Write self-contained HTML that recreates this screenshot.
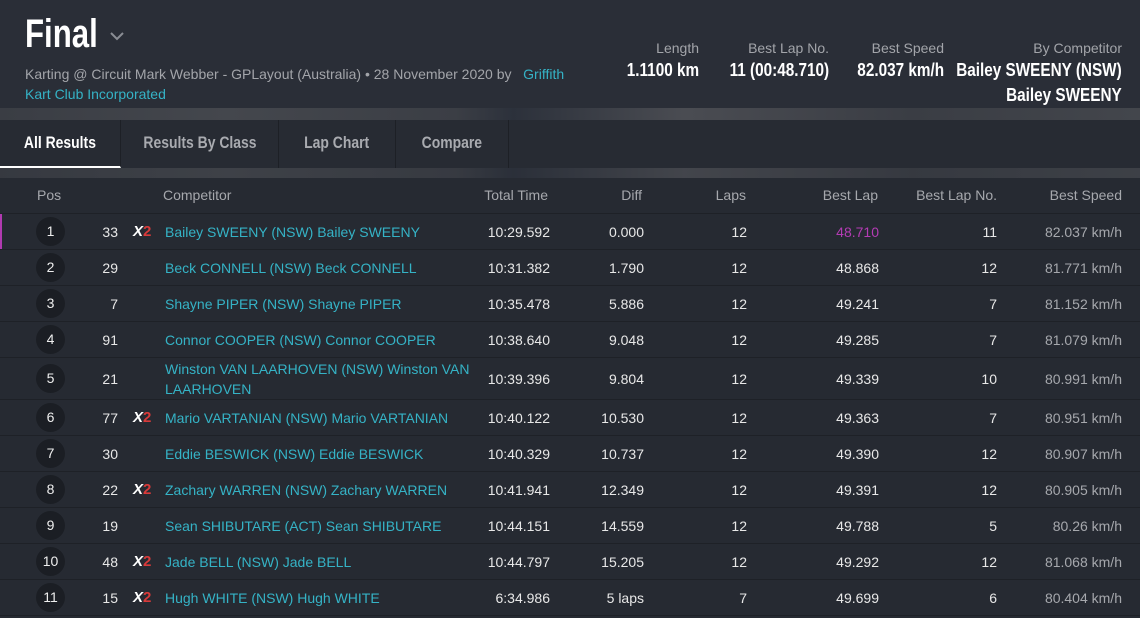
<!DOCTYPE html>
<html><head><meta charset="utf-8"><style>
*{margin:0;padding:0;box-sizing:border-box}
body{width:1140px;height:618px;overflow:hidden;background:#262a32;font-family:"Liberation Sans",sans-serif;color:#e8e8e8;position:relative}
.hdr{position:absolute;left:0;top:0;width:1140px;height:108px;background:#2a2e37}
.band{position:absolute;left:0;width:1140px;background:linear-gradient(90deg,#3a3d44 0%,#44474d 20%,#3b3e45 40%,#2c313b 45%,#4a4c52 60%,#3a3d44 80%,#43464c 100%)}
.tabs{position:absolute;left:0;top:120px;height:48px;width:1140px;background:#272b33}
.tab{position:absolute;top:0;height:48px;line-height:46px;text-align:center;font-size:17px;color:#a9abb0;border-right:1px solid #1d2026}
.tab span{display:inline-block;transform:scaleX(.82);font-weight:bold}
.a{position:absolute;white-space:nowrap}
.r{text-align:right}
.lnk{color:#35b3c6}
.row{position:absolute;left:0;width:1140px;border-bottom:1px solid #1e2127;font-size:14px}
.circ{position:absolute;left:36px;width:29px;height:29px;border-radius:50%;background:#1b1e24;text-align:center;line-height:29px;color:#eee}
.x2{font-style:italic;font-weight:bold;font-size:15px;color:#fff}
.x2 b{color:#d83a3a;font-style:normal}
.th{position:absolute;top:187px;font-size:14px;color:#a6a8ad}
.spd{color:#a6a8ad}
.lab{font-size:14px;color:#a3a5aa;top:40px}
.val{top:58px;font-size:18px;color:#fff;font-weight:bold;transform:scaleX(.85);transform-origin:right;line-height:25px}
</style></head><body>
<div class="hdr"></div>
<div class="a" style="left:25px;top:12px;font-size:40px;color:#fff;font-weight:bold;transform:scaleX(.78);transform-origin:left">Final</div>
<svg class="a" style="left:110px;top:31px" width="14" height="10"><path d="M1 2 L7 8 L13 2" stroke="#8a8d94" stroke-width="2" fill="none"/></svg>
<div class="a" style="left:25px;top:66px;font-size:14px;color:#a3a5aa">Karting @ Circuit Mark Webber - GPLayout (Australia) • 28 November 2020 by &nbsp; <span class="lnk">Griffith</span></div>
<div class="a lnk" style="left:25px;top:86px;font-size:14px">Kart Club Incorporated</div>
<div class="a r lab" style="right:441px">Length</div>
<div class="a r val" style="right:441px">1.1100 km</div>
<div class="a r lab" style="right:311px">Best Lap No.</div>
<div class="a r val" style="right:311px">11 (00:48.710)</div>
<div class="a r lab" style="right:196px">Best Speed</div>
<div class="a r val" style="right:196px">82.037 km/h</div>
<div class="a r lab" style="right:18px">By Competitor</div>
<div class="a r val" style="right:18px">Bailey SWEENY (NSW)<br>Bailey SWEENY</div>
<div class="band" style="top:108px;height:12px"></div>
<div class="tabs">
<div class="tab" style="left:0;width:121px;color:#fff;border-bottom:2px solid #fff"><span>All Results</span></div>
<div class="tab" style="left:121px;width:158px"><span>Results By Class</span></div>
<div class="tab" style="left:279px;width:117px"><span>Lap Chart</span></div>
<div class="tab" style="left:396px;width:113px"><span>Compare</span></div>
</div>
<div class="band" style="top:168px;height:10px;opacity:.8"></div>
<div class="a" style="left:0;top:178px;width:1140px;height:36px;border-bottom:1px solid #1e2127"></div>
<div class="th" style="left:37px">Pos</div>
<div class="th" style="left:163px">Competitor</div>
<div class="th r" style="right:592px">Total Time</div>
<div class="th r" style="right:498px">Diff</div>
<div class="th r" style="right:394px">Laps</div>
<div class="th r" style="right:262px">Best Lap</div>
<div class="th r" style="right:143px">Best Lap No.</div>
<div class="th r" style="right:18px">Best Speed</div>
<div class="row" style="top:214px;height:36px;box-shadow:inset 2px 0 0 #b03ab0"><div class="circ" style="top:3px">1</div><div class="a r" style="right:1022px;top:10px">33</div><div class="a x2" style="left:133px;top:9px">X<b>2</b></div><div class="a lnk" style="left:165px;top:10px">Bailey SWEENY (NSW) Bailey SWEENY</div><div class="a r" style="right:590px;top:10px">10:29.592</div><div class="a r" style="right:496px;top:10px">0.000</div><div class="a r" style="right:393px;top:10px">12</div><div class="a r" style="right:261px;top:10px;color:#b43cb4">48.710</div><div class="a r" style="right:143px;top:10px">11</div><div class="a r spd" style="right:18px;top:10px">82.037 km/h</div></div>
<div class="row" style="top:250px;height:36px"><div class="circ" style="top:3px">2</div><div class="a r" style="right:1022px;top:10px">29</div><div class="a lnk" style="left:165px;top:10px">Beck CONNELL (NSW) Beck CONNELL</div><div class="a r" style="right:590px;top:10px">10:31.382</div><div class="a r" style="right:496px;top:10px">1.790</div><div class="a r" style="right:393px;top:10px">12</div><div class="a r" style="right:261px;top:10px">48.868</div><div class="a r" style="right:143px;top:10px">12</div><div class="a r spd" style="right:18px;top:10px">81.771 km/h</div></div>
<div class="row" style="top:286px;height:36px"><div class="circ" style="top:3px">3</div><div class="a r" style="right:1022px;top:10px">7</div><div class="a lnk" style="left:165px;top:10px">Shayne PIPER (NSW) Shayne PIPER</div><div class="a r" style="right:590px;top:10px">10:35.478</div><div class="a r" style="right:496px;top:10px">5.886</div><div class="a r" style="right:393px;top:10px">12</div><div class="a r" style="right:261px;top:10px">49.241</div><div class="a r" style="right:143px;top:10px">7</div><div class="a r spd" style="right:18px;top:10px">81.152 km/h</div></div>
<div class="row" style="top:322px;height:36px"><div class="circ" style="top:3px">4</div><div class="a r" style="right:1022px;top:10px">91</div><div class="a lnk" style="left:165px;top:10px">Connor COOPER (NSW) Connor COOPER</div><div class="a r" style="right:590px;top:10px">10:38.640</div><div class="a r" style="right:496px;top:10px">9.048</div><div class="a r" style="right:393px;top:10px">12</div><div class="a r" style="right:261px;top:10px">49.285</div><div class="a r" style="right:143px;top:10px">7</div><div class="a r spd" style="right:18px;top:10px">81.079 km/h</div></div>
<div class="row" style="top:358px;height:42px"><div class="circ" style="top:6px">5</div><div class="a r" style="right:1022px;top:13px">21</div><div class="a lnk" style="left:165px;top:1px;line-height:20px">Winston VAN LAARHOVEN (NSW) Winston VAN<br>LAARHOVEN</div><div class="a r" style="right:590px;top:13px">10:39.396</div><div class="a r" style="right:496px;top:13px">9.804</div><div class="a r" style="right:393px;top:13px">12</div><div class="a r" style="right:261px;top:13px">49.339</div><div class="a r" style="right:143px;top:13px">10</div><div class="a r spd" style="right:18px;top:13px">80.991 km/h</div></div>
<div class="row" style="top:400px;height:36px"><div class="circ" style="top:3px">6</div><div class="a r" style="right:1022px;top:10px">77</div><div class="a x2" style="left:133px;top:9px">X<b>2</b></div><div class="a lnk" style="left:165px;top:10px">Mario VARTANIAN (NSW) Mario VARTANIAN</div><div class="a r" style="right:590px;top:10px">10:40.122</div><div class="a r" style="right:496px;top:10px">10.530</div><div class="a r" style="right:393px;top:10px">12</div><div class="a r" style="right:261px;top:10px">49.363</div><div class="a r" style="right:143px;top:10px">7</div><div class="a r spd" style="right:18px;top:10px">80.951 km/h</div></div>
<div class="row" style="top:436px;height:36px"><div class="circ" style="top:3px">7</div><div class="a r" style="right:1022px;top:10px">30</div><div class="a lnk" style="left:165px;top:10px">Eddie BESWICK (NSW) Eddie BESWICK</div><div class="a r" style="right:590px;top:10px">10:40.329</div><div class="a r" style="right:496px;top:10px">10.737</div><div class="a r" style="right:393px;top:10px">12</div><div class="a r" style="right:261px;top:10px">49.390</div><div class="a r" style="right:143px;top:10px">12</div><div class="a r spd" style="right:18px;top:10px">80.907 km/h</div></div>
<div class="row" style="top:472px;height:36px"><div class="circ" style="top:3px">8</div><div class="a r" style="right:1022px;top:10px">22</div><div class="a x2" style="left:133px;top:9px">X<b>2</b></div><div class="a lnk" style="left:165px;top:10px">Zachary WARREN (NSW) Zachary WARREN</div><div class="a r" style="right:590px;top:10px">10:41.941</div><div class="a r" style="right:496px;top:10px">12.349</div><div class="a r" style="right:393px;top:10px">12</div><div class="a r" style="right:261px;top:10px">49.391</div><div class="a r" style="right:143px;top:10px">12</div><div class="a r spd" style="right:18px;top:10px">80.905 km/h</div></div>
<div class="row" style="top:508px;height:36px"><div class="circ" style="top:3px">9</div><div class="a r" style="right:1022px;top:10px">19</div><div class="a lnk" style="left:165px;top:10px">Sean SHIBUTARE (ACT) Sean SHIBUTARE</div><div class="a r" style="right:590px;top:10px">10:44.151</div><div class="a r" style="right:496px;top:10px">14.559</div><div class="a r" style="right:393px;top:10px">12</div><div class="a r" style="right:261px;top:10px">49.788</div><div class="a r" style="right:143px;top:10px">5</div><div class="a r spd" style="right:18px;top:10px">80.26 km/h</div></div>
<div class="row" style="top:544px;height:36px"><div class="circ" style="top:3px">10</div><div class="a r" style="right:1022px;top:10px">48</div><div class="a x2" style="left:133px;top:9px">X<b>2</b></div><div class="a lnk" style="left:165px;top:10px">Jade BELL (NSW) Jade BELL</div><div class="a r" style="right:590px;top:10px">10:44.797</div><div class="a r" style="right:496px;top:10px">15.205</div><div class="a r" style="right:393px;top:10px">12</div><div class="a r" style="right:261px;top:10px">49.292</div><div class="a r" style="right:143px;top:10px">12</div><div class="a r spd" style="right:18px;top:10px">81.068 km/h</div></div>
<div class="row" style="top:580px;height:36px"><div class="circ" style="top:3px">11</div><div class="a r" style="right:1022px;top:10px">15</div><div class="a x2" style="left:133px;top:9px">X<b>2</b></div><div class="a lnk" style="left:165px;top:10px">Hugh WHITE (NSW) Hugh WHITE</div><div class="a r" style="right:590px;top:10px">6:34.986</div><div class="a r" style="right:496px;top:10px">5 laps</div><div class="a r" style="right:393px;top:10px">7</div><div class="a r" style="right:261px;top:10px">49.699</div><div class="a r" style="right:143px;top:10px">6</div><div class="a r spd" style="right:18px;top:10px">80.404 km/h</div></div>
</body></html>
